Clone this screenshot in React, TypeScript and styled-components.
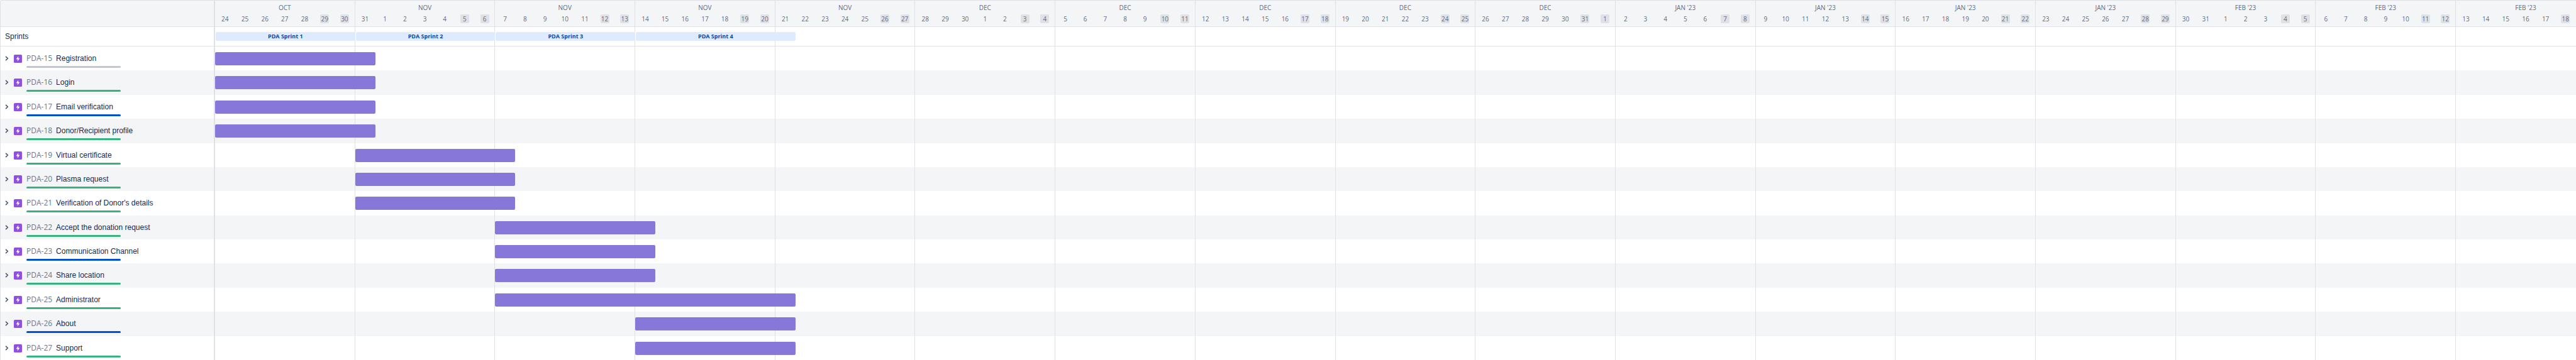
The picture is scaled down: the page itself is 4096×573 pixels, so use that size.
import React from "react";
import styled, { createGlobalStyle, css } from "styled-components";

const LABEL_FONT = '"Liberation Sans", Arial, sans-serif';
const UI_FONT = '"Open Sans", "Noto Sans", sans-serif';
const LINE = "#dfe1e6";
const STRIPE = "#f4f5f7";

const WEEKS = 17;
const VISIBLE_DAYS = WEEKS * 7 - 1;

const monthLabels = [
  "OCT", "NOV", "NOV", "NOV", "NOV", "DEC", "DEC", "DEC", "DEC", "DEC",
  "JAN '23", "JAN '23", "JAN '23", "JAN '23", "FEB '23", "FEB '23", "FEB '23",
];

const weeks = monthLabels.map((label, w) => ({
  label,
  days: Array.from({ length: Math.min(7, VISIBLE_DAYS - w * 7) }, (_, d) =>
    new Date(Date.UTC(2022, 9, 24 + w * 7 + d)).getUTCDate()
  ),
}));

const sprints = [
  { name: "PDA Sprint 1", from: 0, to: 7 },
  { name: "PDA Sprint 2", from: 7, to: 14 },
  { name: "PDA Sprint 3", from: 14, to: 21 },
  { name: "PDA Sprint 4", from: 21, to: 29 },
];

type Status = "todo" | "done" | "active";

const statusColor: Record<Status, string> = {
  todo: "#c1c7d0",
  done: "#36b37e",
  active: "#0052cc",
};

const epics: { id: string; title: string; status: Status; from: number; to: number }[] = [
  { id: "PDA-15", title: "Registration", status: "todo", from: 0, to: 8 },
  { id: "PDA-16", title: "Login", status: "done", from: 0, to: 8 },
  { id: "PDA-17", title: "Email verification", status: "active", from: 0, to: 8 },
  { id: "PDA-18", title: "Donor/Recipient profile", status: "done", from: 0, to: 8 },
  { id: "PDA-19", title: "Virtual certificate", status: "done", from: 7, to: 15 },
  { id: "PDA-20", title: "Plasma request", status: "done", from: 7, to: 15 },
  { id: "PDA-21", title: "Verification of Donor's details", status: "done", from: 7, to: 15 },
  { id: "PDA-22", title: "Accept the donation request", status: "done", from: 14, to: 22 },
  { id: "PDA-23", title: "Communication Channel", status: "active", from: 14, to: 22 },
  { id: "PDA-24", title: "Share location", status: "done", from: 14, to: 22 },
  { id: "PDA-25", title: "Administrator", status: "done", from: 14, to: 29 },
  { id: "PDA-26", title: "About", status: "active", from: 21, to: 29 },
  { id: "PDA-27", title: "Support", status: "done", from: 21, to: 29 },
];

const GlobalStyle = createGlobalStyle`
  *, *::before, *::after { box-sizing: border-box; }
  body { margin: 0; background: #fff; }
`;

const Roadmap = styled.main`
  display: grid;
  grid-template-columns: 341px minmax(0, 1fr);
  min-height: 100vh;
  border-top: 1px solid ${LINE};
  border-left: 1px solid ${LINE};
  border-top-left-radius: 3px;
  overflow: hidden;
  color: #172b4d;
  font-family: ${LABEL_FONT};
`;

const column = css`
  display: grid;
  grid-template-rows: 42px 31px repeat(${epics.length}, minmax(38px, 1fr));
`;

const Sidebar = styled.section`
  ${column}
  border-right: 2px solid ${LINE};
`;

const Timeline = styled.section`
  overflow: hidden;
  min-width: 0;
`;

const Track = styled.div`
  ${column}
  width: calc(100% * ${WEEKS * 7} / ${VISIBLE_DAYS});
  height: 100%;
`;

const HeaderCell = styled.div`
  background: ${STRIPE};
  border-bottom: 1px solid ${LINE};
`;

const SprintsLabel = styled.div`
  display: flex;
  align-items: center;
  padding-left: 7px;
  border-bottom: 1px solid ${LINE};
  font-size: 12px;
  line-height: 16px;
`;

const EpicCell = styled.div<{ $striped: boolean }>`
  display: flex;
  align-items: flex-start;
  padding: 10px 8px 0 7px;
  background: ${(p) => (p.$striped ? STRIPE : "#fff")};
`;

const ExpandButton = styled.button`
  display: flex;
  flex: none;
  width: 14px;
  height: 18px;
  align-items: center;
  padding: 0;
  border: 0;
  background: none;
`;

const EpicIcon = styled.svg`
  flex: none;
  width: 13px;
  height: 13px;
  margin: 3px 7px 0 0;
`;

const EpicBody = styled.div`
  display: flex;
  flex-direction: column;
  gap: 3px;
`;

const EpicText = styled.div`
  display: flex;
  align-items: flex-start;
  gap: 6px;
  height: 18px;
  white-space: nowrap;
`;

const EpicKey = styled.a`
  color: #6b778c;
  font: 400 12px/18px ${UI_FONT};
  text-decoration: none;
`;

const EpicTitle = styled.span`
  font-size: 12px;
  line-height: 18px;
`;

const Progress = styled.div<{ $status: Status }>`
  width: 150px;
  height: 3px;
  border-radius: 2px;
  background: ${(p) => statusColor[p.$status]};
`;

const weekGrid = css`
  display: grid;
  grid-template-columns: repeat(${WEEKS}, minmax(0, 1fr));
`;

const HeaderRow = styled(HeaderCell)`
  ${weekGrid}
`;

const Week = styled.div`
  display: flex;
  flex-direction: column;
  padding-top: 4px;
  border-right: 1px solid ${LINE};
  color: #5e6c84;
  font: 400 10px/14px ${UI_FONT};
  text-align: center;
`;

const Days = styled.div`
  display: grid;
  grid-template-columns: repeat(7, minmax(0, 1fr));
  justify-items: center;
  padding-top: 4px;
`;

const Day = styled.span<{ $weekend: boolean }>`
  min-width: 14px;
  height: 14px;
  border-radius: 2px;
  background: ${(p) => (p.$weekend ? LINE : "transparent")};
`;

const LaneRow = styled.div<{ $striped?: boolean; $ruled?: boolean }>`
  display: grid;
  background: ${(p) => (p.$striped ? STRIPE : "#fff")};
  border-bottom: ${(p) => (p.$ruled ? `1px solid ${LINE}` : "0")};
`;

const WeekLines = styled.div`
  ${weekGrid}
  grid-area: 1 / 1;
`;

const WeekLine = styled.div`
  border-right: 1px solid ${LINE};
`;

const Lane = styled.div`
  display: grid;
  grid-area: 1 / 1;
  grid-template-columns: repeat(${WEEKS * 7}, minmax(0, 1fr));
  align-items: start;
`;

const SprintBar = styled.div<{ $from: number; $to: number }>`
  grid-row: 1;
  grid-column: ${(p) => p.$from + 1} / ${(p) => p.$to + 1};
  height: 14px;
  margin: 8px 0 0 1px;
  border-radius: 2px;
  background: #deebff;
  color: #0747a6;
  font: 700 9px/14px ${UI_FONT};
  text-align: center;
`;

const EpicBar = styled.div<{ $from: number; $to: number }>`
  grid-row: 1;
  grid-column: ${(p) => p.$from + 1} / ${(p) => p.$to + 1};
  height: 21px;
  margin-top: 9px;
  border-radius: 2px;
  background: #8777d9;
`;

const Lines = () => (
  <WeekLines>
    {weeks.map((_, i) => (
      <WeekLine key={i} />
    ))}
  </WeekLines>
);

export default function App() {
  return (
    <>
      <GlobalStyle />
      <Roadmap>
        <Sidebar>
          <HeaderCell />
          <SprintsLabel>Sprints</SprintsLabel>
          {epics.map((e, i) => (
            <EpicCell key={e.id} $striped={i % 2 === 1}>
              <ExpandButton aria-label={`Expand ${e.id}`}>
                <svg width="6" height="8" viewBox="0 0 6 8" fill="none">
                  <path d="M1.5 1.3 4.4 4 1.5 6.7" stroke="#42526e" strokeWidth="1.6" strokeLinecap="round" strokeLinejoin="round" />
                </svg>
              </ExpandButton>
              <EpicIcon viewBox="0 0 16 16" aria-hidden="true">
                <rect width="16" height="16" rx="2" fill="#904ee2" />
                <path d="M8.8 3v4.2H11.6L7.2 13V8.8H4.4z" fill="#fff" />
              </EpicIcon>
              <EpicBody>
                <EpicText>
                  <EpicKey href={`#${e.id}`}>{e.id}</EpicKey>
                  <EpicTitle>{e.title}</EpicTitle>
                </EpicText>
                <Progress $status={e.status} />
              </EpicBody>
            </EpicCell>
          ))}
        </Sidebar>
        <Timeline>
          <Track>
            <HeaderRow>
              {weeks.map((w, i) => (
                <Week key={i}>
                  {w.label}
                  <Days>
                    {w.days.map((d, j) => (
                      <Day key={j} $weekend={j > 4}>{d}</Day>
                    ))}
                  </Days>
                </Week>
              ))}
            </HeaderRow>
            <LaneRow $ruled>
              <Lines />
              <Lane>
                {sprints.map((s) => (
                  <SprintBar key={s.name} $from={s.from} $to={s.to}>{s.name}</SprintBar>
                ))}
              </Lane>
            </LaneRow>
            {epics.map((e, i) => (
              <LaneRow key={e.id} $striped={i % 2 === 1}>
                <Lines />
                <Lane>
                  <EpicBar $from={e.from} $to={e.to} />
                </Lane>
              </LaneRow>
            ))}
          </Track>
        </Timeline>
      </Roadmap>
    </>
  );
}
